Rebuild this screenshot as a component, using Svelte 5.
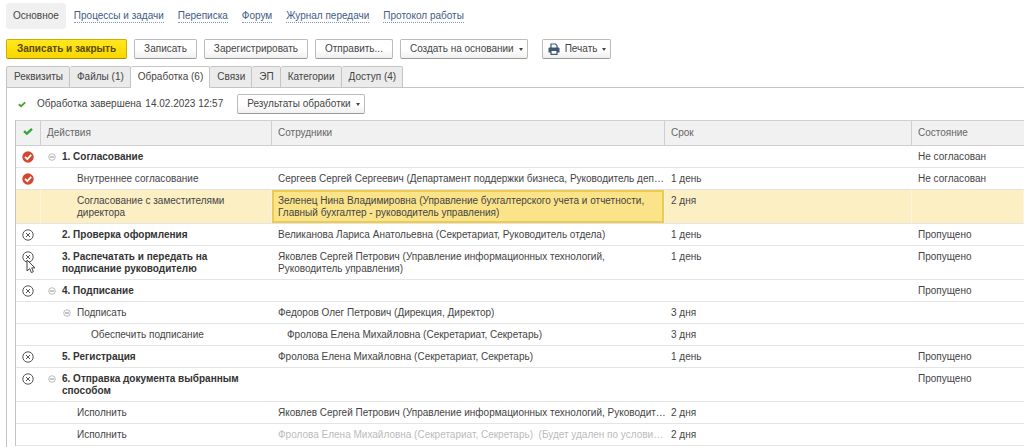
<script lang="ts">
    type Row = {
        state?:  'declined' | 'skipped';
        level:   number;
        open?:   boolean;
        bold?:   boolean;
        action:  string;
        person?: string;
        inset?:  boolean;
        wrap?:   boolean;
        muted?:  boolean;
        term?:   string;
        status?: string;
    };

    const links = ['Процессы и задачи', 'Переписка', 'Форум', 'Журнал передачи', 'Протокол работы'];
    const tabs = ['Реквизиты', 'Файлы (1)', 'Обработка (6)', 'Связи', 'ЭП', 'Категории', 'Доступ (4)'];

    const rows: Row[] = [
        { state: 'declined', level: 0, open: true, bold: true, action: '1. Согласование', status: 'Не согласован' },
        { state: 'declined', level: 1, action: 'Внутреннее согласование', person: 'Сергеев Сергей Сергеевич (Департамент поддержки бизнеса, Руководитель деп…', term: '1 день', status: 'Не согласован' },
        { level: 1, action: 'Согласование с заместителями директора', person: 'Зеленец Нина Владимировна (Управление бухгалтерского учета и отчетности, Главный бухгалтер - руководитель управления)', wrap: true, term: '2 дня' },
        { state: 'skipped', level: 0, bold: true, action: '2. Проверка оформления', person: 'Великанова Лариса Анатольевна (Секретариат, Руководитель отдела)', term: '1 день', status: 'Пропущено' },
        { state: 'skipped', level: 0, bold: true, action: '3. Распечатать и передать на подписание руководителю', person: 'Яковлев Сергей Петрович (Управление информационных технологий,\nРуководитель управления)', wrap: true, term: '1 день', status: 'Пропущено' },
        { state: 'skipped', level: 0, open: true, bold: true, action: '4. Подписание', status: 'Пропущено' },
        { level: 1, open: true, action: 'Подписать', person: 'Федоров Олег Петрович (Дирекция, Директор)', term: '3 дня' },
        { level: 2, action: 'Обеспечить подписание', person: 'Фролова Елена Михайловна (Секретариат, Секретарь)', inset: true, term: '3 дня' },
        { state: 'skipped', level: 0, bold: true, action: '5. Регистрация', person: 'Фролова Елена Михайловна (Секретариат, Секретарь)', term: '1 день', status: 'Пропущено' },
        { state: 'skipped', level: 0, open: true, bold: true, action: '6. Отправка документа выбранным способом', status: 'Пропущено' },
        { level: 1, action: 'Исполнить', person: 'Яковлев Сергей Петрович (Управление информационных технологий, Руководит…', term: '2 дня' },
        { level: 1, action: 'Исполнить', person: 'Фролова Елена Михайловна (Секретариат, Секретарь)  (Будет удален по услови…', muted: true, term: '2 дня' },
    ];

    let activeTab = $state(2);
    let selected = $state(2);
</script>

<!--
========================================================================================================================
    //region HTML
========================================================================================================================
-->

{#snippet check()}
    <svg class="check" viewBox="0 0 10 8" aria-hidden="true">
        <path d="M1 3.6 L3.9 6.2 L9 1.4" fill="none" stroke="currentColor" stroke-width="2.4" />
    </svg>
{/snippet}

<div class="page">
    <nav class="sections">
        <span class="current">Основное</span>
        {#each links as link}
            <a href="#{link}">{link}</a>
        {/each}
    </nav>

    <div class="toolbar">
        <button class="btn primary">Записать и закрыть</button>
        <button class="btn">Записать</button>
        <button class="btn">Зарегистрировать</button>
        <button class="btn">Отправить...</button>
        <button class="btn menu">Создать на основании<i class="caret"></i></button>
        <button class="btn menu print">
            <svg class="printer" viewBox="0 0 12 12" aria-hidden="true">
                <path d="M3 5 V1 H7.5 L9 2.5 V5" fill="#fff" stroke="#3f5a70" stroke-width="1.2" />
                <path d="M1.5 4.5 H10.5 Q11.5 4.5 11.5 5.5 V9.5 H0.5 V5.5 Q0.5 4.5 1.5 4.5 Z" fill="#3f5a70" />
                <path d="M3 7.5 H9 V11.3 H3 Z" fill="#fff" stroke="#3f5a70" stroke-width="1.2" />
            </svg>
            Печать<i class="caret"></i>
        </button>
    </div>

    <div class="tabs" role="tablist">
        {#each tabs as tab, i}
            <button class="tab" class:active={activeTab === i} role="tab" aria-selected={activeTab === i} onclick={() => (activeTab = i)}>{tab}</button>
        {/each}
    </div>

    <div class="panel">
        <div class="summary">
            <span class="done">{@render check()}</span>
            <span>Обработка завершена</span>
            <span class="date">14.02.2023 12:57</span>
            <button class="btn menu">Результаты обработки<i class="caret"></i></button>
        </div>

        <table>
            <colgroup>
                <col class="c-state" />
                <col class="c-action" />
                <col class="c-person" />
                <col class="c-term" />
                <col />
            </colgroup>
            <thead>
                <tr>
                    <th class="mark header-mark" aria-label="Результат">{@render check()}</th>
                    <th>Действия</th>
                    <th>Сотрудники</th>
                    <th>Срок</th>
                    <th>Состояние</th>
                </tr>
            </thead>
            <tbody>
                {#each rows as row, i}
                    <tr class:selected={selected === i} onclick={() => (selected = i)}>
                        <td class="mark">
                            {#if row.state === 'declined'}
                                <svg class="state" viewBox="0 0 12 12" aria-label="Не согласован">
                                    <circle cx="6" cy="6" r="5.7" fill="#d3472f" />
                                    <path d="M3 5.8 L5.3 8.1 L9.2 3.9" fill="none" stroke="#fff" stroke-width="1.8" />
                                </svg>
                            {:else if row.state === 'skipped'}
                                <svg class="state" viewBox="0 0 12 12" aria-label="Пропущено">
                                    <circle cx="6" cy="6" r="5.2" fill="#fff" stroke="#555" />
                                    <path d="M4 4 L8 8 M8 4 L4 8" stroke="#555" />
                                </svg>
                            {/if}
                            {#if i === 4}
                                <svg class="cursor" viewBox="0 0 10 15" aria-hidden="true">
                                    <path d="M1 1 V12 L3.6 9.6 L5.4 13.6 L7.4 12.7 L5.7 8.9 H9 Z" fill="#fff" stroke="#444" />
                                </svg>
                            {/if}
                        </td>
                        <td>
                            <div class="action level-{row.level}" class:bold={row.bold}>
                                <span class="toggle">
                                    {#if row.open}
                                        <svg viewBox="0 0 8 8" aria-hidden="true">
                                            <circle cx="4" cy="4" r="3.3" fill="none" stroke="#aaa" stroke-width="0.8" />
                                            <path d="M2 4 H6" stroke="#888" />
                                        </svg>
                                    {/if}
                                </span>
                                <span>{row.action}</span>
                            </div>
                        </td>
                        <td class="person" class:wrap={row.wrap} class:muted={row.muted} class:inset={row.inset}>{row.person ?? ''}</td>
                        <td>{row.term ?? ''}</td>
                        <td>{row.status ?? ''}</td>
                    </tr>
                {/each}
            </tbody>
        </table>
    </div>
</div>

<!--
========================================================================================================================
    //region CSS
========================================================================================================================
-->

<style>
    :global(body) {
        margin: 0;
        background: #fff;
    }

    .page {
        display: flex;
        flex-direction: column;
        box-sizing: border-box;
        height: 100vh;
        padding: 3px 0 0 6px;
        overflow: hidden;
        font-family: "Liberation Sans", Arial, sans-serif;
        font-size: 10px;
        line-height: 12px;
        color: #444;
    }

    .sections {
        display: flex;
        align-items: center;
        gap: 14px;
        flex: none;
        height: 26px;
        margin-bottom: 10px;
    }

    .sections .current {
        padding: 7px;
        margin-right: -6px;
        background: #f0f0f0;
        border-radius: 3px;
    }

    .sections a {
        color: #3f5c87;
        text-decoration: none;
        border-bottom: 1px dotted #8496b3;
    }

    .toolbar {
        display: flex;
        flex: none;
        gap: 7px;
        margin-bottom: 7px;
    }

    .btn {
        display: flex;
        align-items: center;
        box-sizing: border-box;
        height: 20px;
        padding: 0 9px;
        font: inherit;
        color: #444;
        white-space: nowrap;
        background: linear-gradient(#fff 50%, #f0f0f0);
        border: 1px solid #bbb;
        border-bottom-color: #999;
        border-radius: 2px;
        cursor: pointer;
    }

    .btn.primary {
        padding: 0 10px;
        font-weight: bold;
        color: #5a4a00;
        background: linear-gradient(#ffe81f, #f8d500);
        border-color: #cfae00;
        border-bottom-color: #a88d00;
    }

    .btn.menu { padding-right: 4px; }
    .btn.print { margin-left: 7px; padding-left: 5px; }

    .caret {
        margin-left: 5px;
        border: 2px solid transparent;
        border-top: 3px solid #444;
        border-bottom: none;
    }

    .printer {
        width: 12px;
        height: 12px;
        margin-right: 5px;
    }

    .tabs {
        display: flex;
        flex: none;
        height: 21px;
        border-bottom: 1px solid #c4c4c4;
    }

    .tab {
        height: 22px;
        padding: 0 6px 0 7px;
        font: inherit;
        color: #444;
        background: #ebebeb;
        border: 1px solid #c4c4c4;
        border-left-width: 0;
        border-radius: 2px 2px 0 0;
        cursor: pointer;
    }

    .tab:first-child { border-left-width: 1px; }

    .tab.active {
        background: #fff;
        border-bottom-color: #fff;
    }

    .panel {
        flex: 1;
        padding: 6px 0 0 8px;
        border-left: 1px solid #c4c4c4;
    }

    .summary {
        display: flex;
        align-items: center;
        margin-bottom: 6px;
    }

    .done {
        display: flex;
        width: 19px;
        padding-left: 3px;
        color: #4aa32e;
    }

    .done .check { width: 8px; height: 7px; }

    .date { margin: 0 14px 0 4px; }

    .check { width: 10px; height: 9px; }

    table {
        width: 100%;
        table-layout: fixed;
        border-collapse: separate;
        border-spacing: 0;
        border-left: 1px solid #c4c4c4;
    }

    .c-state { width: 25px; }
    .c-action { width: 231px; }
    .c-person { width: 393px; }
    .c-term { width: 247px; }

    th {
        height: 24px;
        padding: 0 6px;
        font-weight: normal;
        text-align: left;
        color: #666;
        background: #f1f1f1;
        border: solid #cfcfcf;
        border-width: 1px 1px 1px 0;
    }

    td {
        height: 12px;
        padding: 5px 6px 4px;
        vertical-align: top;
        border-bottom: 1px solid #e4e4e4;
    }

    th:last-child { border-right: none; }

    .mark {
        position: relative;
        padding: 0;
        text-align: center;
    }

    .header-mark { color: #35a83c; }

    .state {
        display: block;
        width: 12px;
        height: 12px;
        margin: 5px 0 0 6px;
    }

    .cursor {
        position: absolute;
        left: 10px;
        top: 13px;
        width: 10px;
        height: 15px;
    }

    .action { display: flex; }
    .level-1 { padding-left: 15px; }
    .level-2 { padding-left: 29px; }
    .bold { font-weight: bold; color: #333; }

    .toggle {
        flex: none;
        width: 15px;
    }

    .toggle svg {
        display: block;
        width: 8px;
        height: 8px;
        margin: 2px 1px;
    }

    .person {
        padding-right: 0;
        white-space: pre;
    }

    .person.wrap { white-space: pre-line; }
    .person.muted { color: #bbb; }
    .person.inset { padding-left: 15px; }

    .selected td {
        background: #fcefc4;
        border-right: 1px solid #fdf5da;
    }

    .selected .person {
        background: #fbe38a;
        box-shadow: inset 0 0 0 2px #eccb55;
    }
</style>
